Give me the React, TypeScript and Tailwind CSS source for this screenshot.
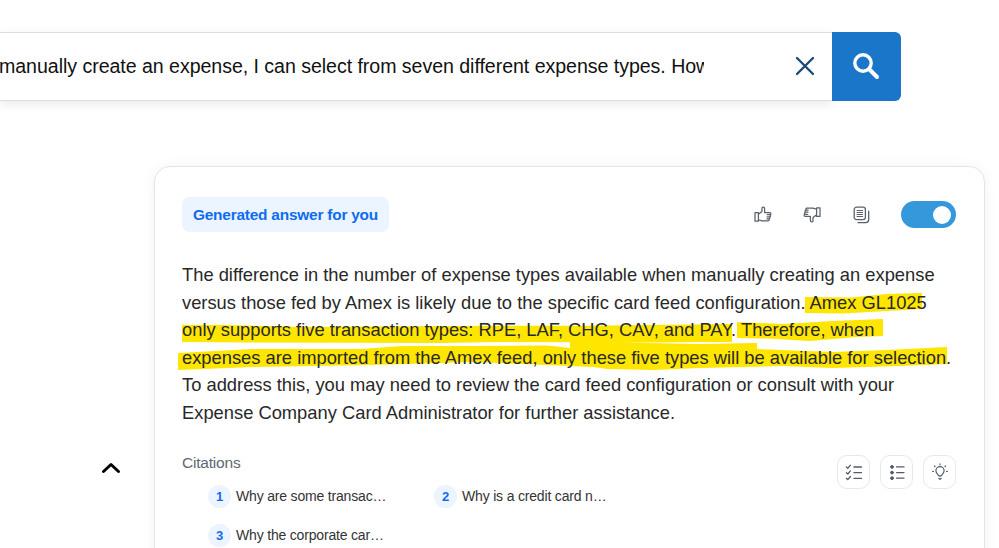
import React from "react";

const answerLines = [
  "The difference in the number of expense types available when manually creating an expense",
  "versus those fed by Amex is likely due to the specific card feed configuration. Amex GL1025",
  "only supports five transaction types: RPE, LAF, CHG, CAV, and PAY. Therefore, when",
  "expenses are imported from the Amex feed, only these five types will be available for selection.",
  "To address this, you may need to review the card feed configuration or consult with your",
  "Expense Company Card Administrator for further assistance.",
];

const citations = [
  { id: 1, title: "Why are some transac…" },
  { id: 2, title: "Why is a credit card n…" },
  { id: 3, title: "Why the corporate car…" },
];

const SearchBar = () => {
  return (
    <div className="mt-8 flex h-[69px] w-[901px] shrink-0">
      <div className="flex flex-1 items-center border-t border-b border-[#dedede] bg-white pb-0.5 shadow-[0_3px_10px_rgba(0,0,0,0.09)]">
        <div className="w-[704px] overflow-hidden whitespace-nowrap text-[19.6px] tracking-[-0.05px] leading-7 text-[#111]">
          <span className="-ml-px">manually create an expense, I can select from seven different expense types. How</span>
        </div>
        <svg className="ml-[91px]" width="20" height="20" viewBox="0 0 20 20" fill="none" stroke="#184a73" strokeWidth="2.3" strokeLinecap="round">
          <path d="M2 2l16 16M18 2L2 18" />
        </svg>
      </div>
      <button className="flex w-[69px] items-center justify-center rounded-r-md bg-[#1976c8] pr-0.5 pb-0.5">
        <svg width="28" height="28" viewBox="0 0 28 28" fill="none" stroke="#fff" strokeLinecap="round">
          <circle cx="11" cy="11" r="8.2" strokeWidth="3.4" />
          <path d="M17.5 17.5L25 25" strokeWidth="4" />
        </svg>
      </button>
    </div>
  );
};

const ThumbIcon = ({ className = "" }) => {
  return (
    <svg className={className} width="18" height="17" viewBox="0 0 18 17" fill="none" stroke="#5b626d" strokeWidth="1.25" strokeLinejoin="round" strokeLinecap="round">
      <path d="M1 6.6h3.4v8.6H1zM4.4 8.2L8 5.4V2.2c0-1.6 2.6-1.6 2.6.4v4h5.2c1.5 0 1.5 2.1.1 2.1h-2.6M15.6 8.7c1.4.2 1.2 2.1-.2 2.1h-2.3M15.1 10.8c1.3.3 1 2-.2 2h-2M14.7 12.8c.9.4.7 2-.6 2H8.2l-3.8-1" />
    </svg>
  );
};

const CopyIcon = () => {
  return (
    <svg width="17" height="18" viewBox="0 0 17 18" fill="none" stroke="#5b626d" strokeWidth="1.3" strokeLinecap="round">
      <rect x="1.2" y="1.2" width="11.2" height="12.4" rx="2.4" />
      <path d="M4 4.5h5.6M4 6.5h5.6M4 8.5h5.6M4 10.5h5.6" strokeWidth="1.1" />
      <path d="M15.7 5.2v8.4c0 2-1 3.1-3 3.1H5" />
    </svg>
  );
};

const CheckListIcon = () => {
  return (
    <svg width="18" height="17" viewBox="0 0 18 17" fill="none" stroke="#545b66" strokeWidth="1.3" strokeLinecap="round" strokeLinejoin="round">
      <path d="M1.4 3l1.4 1.3L5.4 1.2M1.4 8.7L2.8 10l2.6-3.1M1.4 14.3l1.4 1.3 2.6-3.1" />
      <path d="M8.9 3h7.6M8.9 8.6h7.6M8.9 14.3h7.6" />
    </svg>
  );
};

const BulletListIcon = () => {
  return (
    <svg width="18" height="17" viewBox="0 0 18 17" fill="#545b66" stroke="#545b66" strokeLinecap="round">
      <path d="M8.6 2.9h7.4M8.6 8.6h7.4M8.6 14.2h7.4" strokeWidth="1.3" />
      <circle cx="4" cy="2.9" r="1.4" />
      <circle cx="4" cy="8.6" r="1.4" />
      <circle cx="4" cy="14.2" r="1.4" />
    </svg>
  );
};

const BulbIcon = () => {
  return (
    <svg width="18" height="18" viewBox="0 0 18 18" fill="none" stroke="#545b66" strokeWidth="1.2" strokeLinecap="round" strokeLinejoin="round">
      <path d="M7.3 12.4c-.4-1.5-2.4-2.3-2.4-4.6a4.1 4.1 0 0 1 8.2 0c0 2.3-2 3.1-2.4 4.6L9 13.3zM7.8 15.3L9 16.4l1.2-1.1" />
      <path d="M9 .9v.9M3.4 2.9l.6.6M14.6 2.9l-.6.6M1.6 8.3h.8M15.6 8.3h.8" />
    </svg>
  );
};

// marker strokes painted behind the answer text
const Marker = () => {
  return (
    <svg className="absolute top-px -left-2.5" width="790" height="165" viewBox="172 262 790 165" fill="#ffe600">
      <path d="M805 297L850 297.5L887 294L922 293V309L887 311L843 313.5L805 313Z" />
      <path d="M182 325L220 325L303 327L450 326L587 325.7L732 324V342L707 342L640 342.5L500 342L440 343L253 342.5L182 342Z" />
      <path d="M737 322L783 324L833 321L883 319V336L857 337L810 341L767 338.5L737 338Z" />
      <path d="M178 353L253 349L360 349L403 346L483 346L547 345.5L570 348V342L607 341.5L647 343L700 344L757 343V349L833 352L887 350L947 347V364L900 366L833 368L783 366L700 368L653 370L607 369L593 367L523 364L473 362L440 363L370 365L253 367L178 370Z" />
    </svg>
  );
};

const ToolButton = ({ children }) => {
  return (
    <button className="flex h-[34px] w-[33px] items-center justify-center rounded-[10px] border border-[#e5e8ea] bg-white">
      {children}
    </button>
  );
};

const AnswerCard = () => {
  return (
    <div className="h-[420px] w-[831px] rounded-2xl border border-[#e3e6e8] bg-white pt-[30px] pr-7 pl-[27px] shadow-[0_0_14px_rgba(0,0,0,0.05)]">
      <div className="flex h-[35px] items-center justify-between">
        <div className="flex h-[35px] w-[207px] items-center justify-center rounded-lg bg-[#ebf4ff] text-[15.4px] font-bold tracking-[-0.2px] whitespace-nowrap text-[#0f6cf0]">
          Generated answer for you
        </div>
        <div className="flex items-center">
          <ThumbIcon />
          <ThumbIcon className="ml-[31px] rotate-180" />
          <div className="ml-8"><CopyIcon /></div>
          <div className="ml-[31px] flex h-[27px] w-[55px] items-center justify-end rounded-full bg-[#3498db] pr-[5px]">
            <div className="size-[18px] rounded-full bg-white" />
          </div>
        </div>
      </div>

      <div className="relative mt-[29px] text-[18.33px] leading-[27.5px] text-[#282828]">
        <Marker />
        <div className="relative">
          {answerLines.map((line) => (
            <p key={line} className="whitespace-nowrap">{line}</p>
          ))}
        </div>
      </div>

      <div className="mt-[29px] flex items-start justify-between">
        <div>
          <h4 className="-mt-px text-[15.5px] leading-[18px] tracking-[-0.2px] text-[#5f6773]">Citations</h4>
          <div className="mt-[5px] ml-[26px] grid grid-cols-[226px_226px]">
            {citations.map((c) => (
              <div key={c.id} className="flex h-[39px] items-center gap-[5px] text-[14px] tracking-[-0.18px] whitespace-nowrap text-[#333]">
                <span className="flex size-[23px] items-center justify-center rounded-full bg-[#ebf4ff] text-[13px] font-bold text-[#0f6cf0]">
                  {c.id}
                </span>
                {c.title}
              </div>
            ))}
          </div>
        </div>
        <div className="flex gap-2.5">
          <ToolButton><CheckListIcon /></ToolButton>
          <ToolButton><BulletListIcon /></ToolButton>
          <ToolButton><BulbIcon /></ToolButton>
        </div>
      </div>
    </div>
  );
};

export default function App() {
  return (
    <div className="flex h-[548px] w-[999px] flex-col overflow-hidden bg-white font-['Liberation_Sans',Arial,sans-serif]">
      <SearchBar />
      <div className="mt-[65px] flex shrink-0">
        <div className="w-[154px] pt-[296px] pl-[101px]">
          <svg width="20" height="12" viewBox="0 0 20 12" fill="none" stroke="#000" strokeWidth="3" strokeLinecap="round" strokeLinejoin="round">
            <path d="M2.5 9.5L10 2.5l7.5 7" />
          </svg>
        </div>
        <AnswerCard />
      </div>
    </div>
  );
}
